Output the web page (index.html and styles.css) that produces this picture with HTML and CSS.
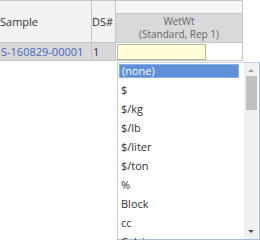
FILE: index.html
```html
<!DOCTYPE html>
<html lang="en">
<head>
    <meta charset="UTF-8">
    <title>Sample Results</title>
    <link rel="stylesheet" href="styles.css">
</head>
<body>
    <div class="grid-wrap">
        <table class="grid">
            <thead>
                <tr>
                    <th class="col-sample" rowspan="2">Sample</th>
                    <th class="col-ds" rowspan="2">DS#</th>
                    <th class="group-cell"></th>
                </tr>
                <tr>
                    <th class="test-head">WetWt<br>(Standard, Rep 1)</th>
                </tr>
            </thead>
            <tbody>
                <tr class="data-row">
                    <td class="sample-id"><a href="#">S-160829-00001</a></td>
                    <td class="ds-num">1</td>
                    <td class="entry-cell"><input type="text" class="unit-input"></td>
                </tr>
            </tbody>
        </table>

        <!-- unit picker, opened under the WetWt cell -->
        <div class="unit-list">
            <ul class="unit-options">
                <li class="selected">(none)</li>
                <li>$</li>
                <li>$/kg</li>
                <li>$/lb</li>
                <li>$/liter</li>
                <li>$/ton</li>
                <li>%</li>
                <li>Block</li>
                <li>cc</li>
                <li>Celsius</li>
            </ul>
            <div class="scrollbar">
                <span class="arrow up"></span>
                <span class="thumb"></span>
                <span class="arrow down"></span>
            </div>
        </div>
    </div>
</body>
</html>
```

FILE: styles.css
```css
/* Results entry grid */
body {
    margin: 0;
    font-family: "Open Sans", "DejaVu Sans", sans-serif;
    font-size: 11px;
    color: #333;
    background-color: #fff;
}

.grid-wrap {
    position: relative;
    width: 260px;
    height: 240px;
    overflow: hidden;
}

.grid {
    border-collapse: collapse;
    table-layout: fixed;
    width: 244px;
    margin-left: -1px;
}

.grid th, .grid td {
    border: 1px solid #c6c6c6;
    padding: 0;
    font-weight: normal;
}

.col-sample {
    width: 91px;
    text-align: left;
    background-color: #f2f2f2;
    padding-left: 1px;
    padding-top: 8px;
}

.col-ds {
    width: 23px;
    text-align: left;
    background-color: #f2f2f2;
    padding-left: 1px;
    padding-top: 8px;
}

.group-cell {
    height: 12px;
    background-color: #f6f6f6;
}

.test-head {
    height: 28px;
    background-color: #d9d9d9;
    color: #666;
    font-size: 10px;
    line-height: 13px;
    text-align: center;
}

.data-row td {
    height: 17px;
    background-color: #d8d8d8;
    padding-left: 1px;
}

.sample-id a {
    color: #4a64c0;
    text-decoration: none;
}

.data-row .entry-cell {
    background-color: #fff;
    padding-left: 1px;
}

.unit-input {
    display: block;
    width: 89px;
    height: 16px;
    margin: 0;
    padding: 0;
    box-sizing: border-box;
    border: 1px solid #b9b59a;
    background-color: #fffed8;
}

.unit-list {
    position: absolute;
    left: 117px;
    top: 62px;
    width: 143px;
    height: 178px;
    box-sizing: border-box;
    border: 1px solid #c8d3e3;
    border-right-color: #a9bcd6;
    border-bottom-color: #a9bcd6;
    background-color: #fff;
    display: flex;
}

.unit-options {
    list-style: none;
    margin: 0;
    padding: 1px 0 0 1px;
    flex: 1;
}

.unit-options li {
    height: 14px;
    line-height: 14px;
    margin-bottom: 5px;
    padding-left: 2px;
    color: #333;
    font-size: 11px;
    white-space: nowrap;
}

.unit-options li.selected {
    width: 116px;
    background-color: #5f8fd6;
    border: 1px solid #8ab0e6;
    color: #fff;
    height: 12px;
    line-height: 12px;
    padding-top: 0;
}

.scrollbar {
    width: 14px;
    margin-right: 1px;
    background-color: #f0f0f0;
    display: flex;
    flex-direction: column;
    align-items: center;
}

.arrow {
    width: 0;
    height: 0;
    border-left: 3px solid transparent;
    border-right: 3px solid transparent;
}

.arrow.up {
    margin-top: 6px;
    border-bottom: 3px solid #a0a0a0;
}

.arrow.down {
    margin-top: auto;
    margin-bottom: 6px;
    border-top: 3px solid #505050;
}

.thumb {
    width: 11px;
    height: 34px;
    margin-top: 4px;
    background-color: #c1c1c1;
}
```
